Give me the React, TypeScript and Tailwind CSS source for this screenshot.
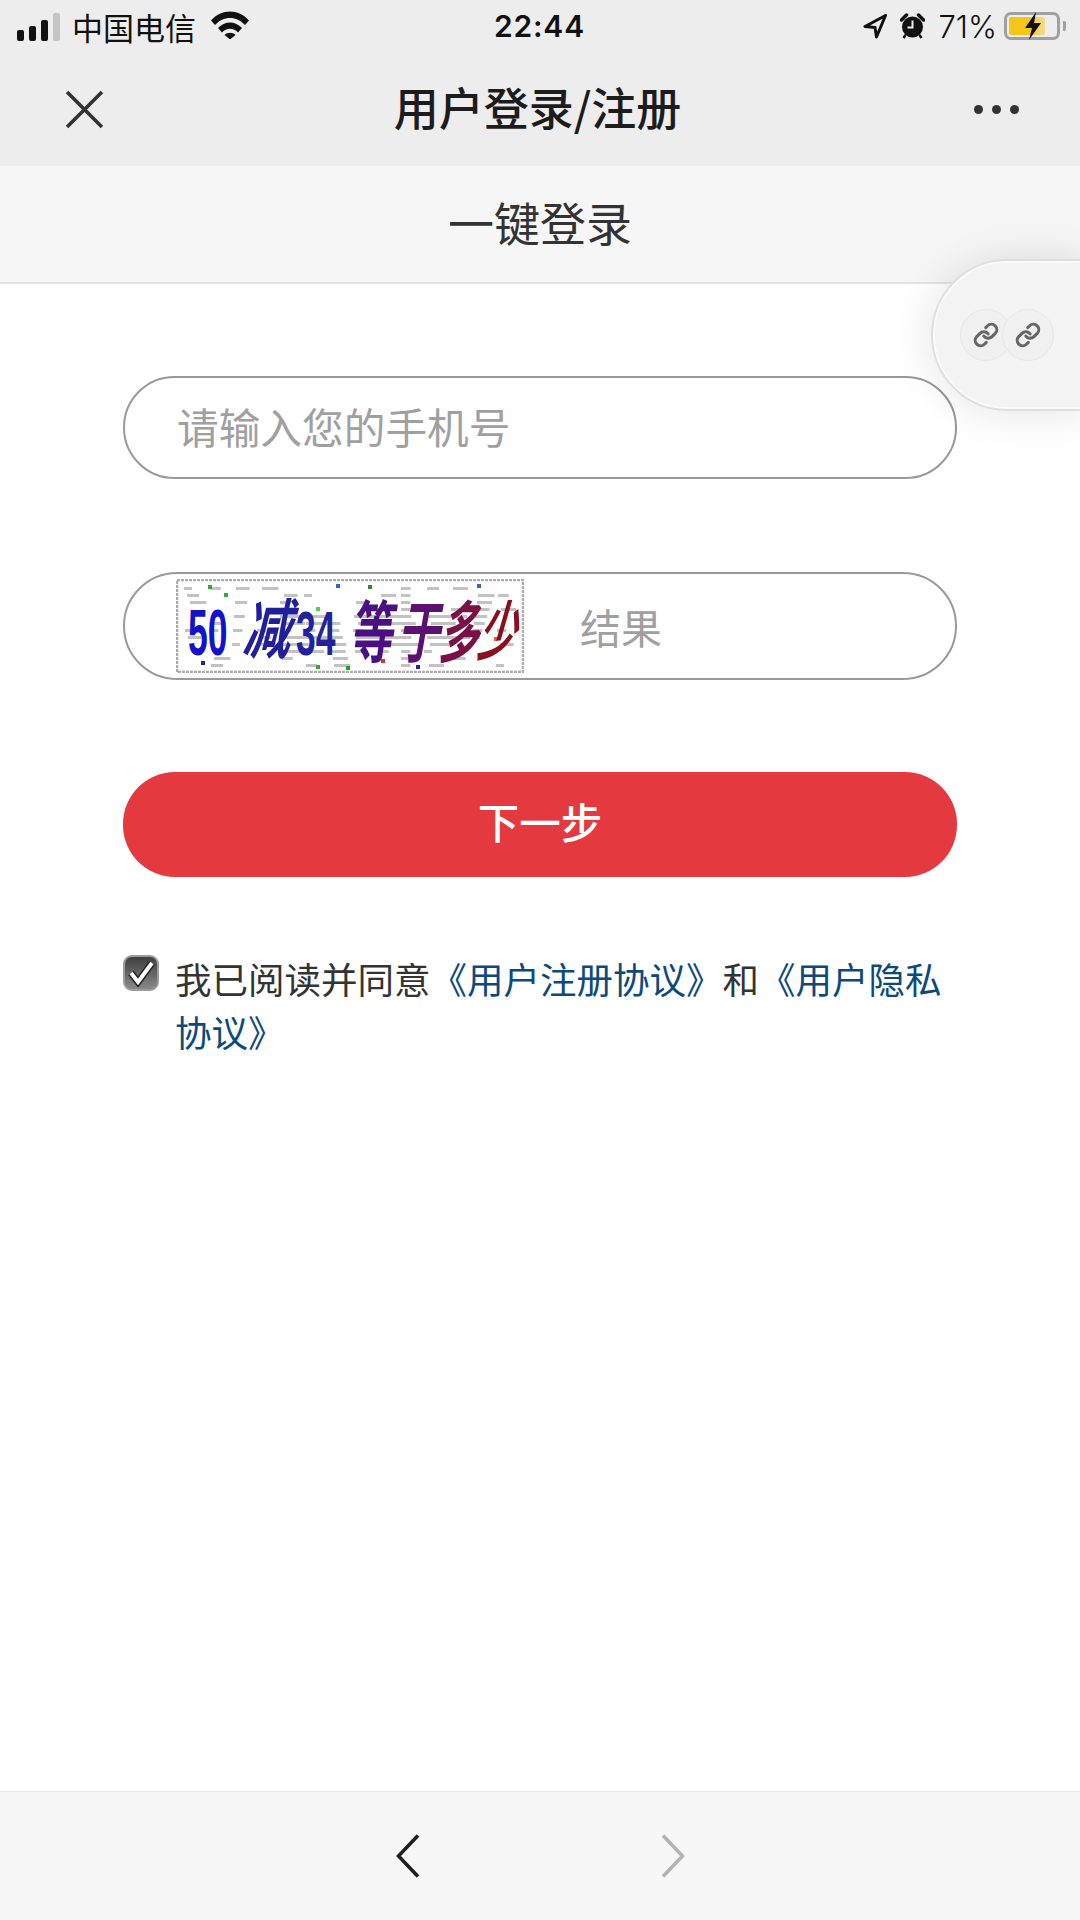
import { Link } from 'lucide-react';

const cjk = "font-['Noto_Sans_CJK_SC','Noto_Sans',sans-serif]";

function StatusBar() {
  return (
    <div className="h-[56px] pb-[4px] flex items-center justify-between relative text-[#111]">
      <div className="flex items-center">
        <div className="flex items-end gap-[5px] ml-[17px] h-[28px] mt-[1px]">
          <span className="w-[7px] h-[11px] rounded-[2px] bg-[#111]" />
          <span className="w-[7px] h-[15px] rounded-[2px] bg-[#111]" />
          <span className="w-[7px] h-[21px] rounded-[2px] bg-[#111]" />
          <span className="w-[7px] h-[28px] rounded-[2px] bg-[#c4c4c4]" />
        </div>
        <span className={`${cjk} text-[31px] leading-none ml-[12px]`}>中国电信</span>
        <svg className="ml-[15px] -mt-[3px]" width="38" height="29" viewBox="0 0 38 29">
          <path d="M0 10.5C10.5 -1.5 27.5 -1.5 38 10.5L34 15C25.5 5.5 12.5 5.5 4 15Z" fill="#111" />
          <path d="M7 18C13.5 10.5 24.5 10.5 31 18L27 22.5C22.5 17.5 15.5 17.5 11 22.5Z" fill="#111" />
          <path d="M13.5 25C16.5 22 21.5 22 24.5 25L19 29.5Z" fill="#111" />
        </svg>
      </div>
      <span className="absolute left-[494px] font-['Inter',sans-serif] font-semibold text-[30px] leading-none tracking-[0.8px]">22:44</span>
      <div className="flex items-center">
        <svg width="24" height="25" viewBox="0 0 24 25">
          <path d="M22.5 1.5L2 12.5L12 13.5L13.5 23Z" fill="none" stroke="#111" strokeWidth="3" strokeLinejoin="round" />
        </svg>
        <svg className="ml-[13px]" width="25" height="26" viewBox="0 0 24 26">
          <circle cx="12" cy="14" r="10.5" fill="#111" />
          <path d="M12 7.5V14.5H7" fill="none" stroke="#ececec" strokeWidth="2" />
          <path d="M1 7L6 2M23 7L18 2" stroke="#111" strokeWidth="3.5" strokeLinecap="round" />
          <path d="M5 22L3 25M19 22L21 25" stroke="#111" strokeWidth="2.5" />
        </svg>
        <span className="font-['Inter',sans-serif] font-light text-[31px] leading-none ml-[13px]">71%</span>
        <div className="relative ml-[7px] w-[56px] h-[28px] rounded-[7px] border-[3px] border-[#a0a0a0] p-[2px]">
          <div className="w-[36px] h-full rounded-[2px] bg-gradient-to-r from-[#f5c518] from-[55%] to-[#f3dc8a]" />
          <svg className="absolute left-[16px] -top-[3px]" width="20" height="28" viewBox="0 0 20 28">
            <path d="M13 0L2 16H9L6 28L18 11H11Z" fill="#111" />
          </svg>
        </div>
        <span className="w-[3px] h-[10px] ml-[3px] mr-[14px] rounded-r-[2px] bg-[#a0a0a0]" />
      </div>
    </div>
  );
}

function NavBar() {
  return (
    <div className="relative h-[110px] flex items-center justify-between pb-[4px] pl-[65px] pr-[61px]">
      <svg width="39" height="39" viewBox="0 0 38 38">
        <path d="M2 2L36 36M36 2L2 36" stroke="#333" strokeWidth="3.5" />
      </svg>
      <span className={`${cjk} text-[45px] leading-none font-medium text-[#1c1c1c] -ml-[3px] -mt-[5px]`}>用户登录/注册</span>
      <div className="flex gap-[9px]">
        <span className="w-[9px] h-[9px] rounded-full bg-[#333]" />
        <span className="w-[9px] h-[9px] rounded-full bg-[#333]" />
        <span className="w-[9px] h-[9px] rounded-full bg-[#333]" />
      </div>
    </div>
  );
}

// captcha is a noisy image in the original, so scatter short grey dashes across it
function Captcha() {
  const noise: number[][] = [];
  for (let row = 0; row < 12; row++) {
    for (let col = 0; col < 14; col++) {
      const seed = (row * 37 + col * 53 + row * col * 11) % 17;
      const central = col > 3 && col < 11 && row > 3 && row < 9;
      if (seed < (central ? 15 : 7)) {
        noise.push([8 + col * 24 + (seed % 9), 8 + row * 7, 8 + seed * (central ? 2.4 : 1.4)]);
      }
    }
  }
  const dots = [
    [32, 6, '#3a3'], [48, 14, '#3a3'], [160, 5, '#36c'], [192, 6, '#383'], [170, 87, '#1a1'], [140, 86, '#3a3'], [140, 28, '#5c5'], [25, 82, '#22a'], [240, 86, '#22a'], [301, 5, '#36c'], [205, 80, '#d33'], [318, 58, '#d63'],
  ] as const;
  return (
    <svg width="348" height="94" viewBox="0 0 348 94" className="shrink-0 blur-[0.5px]">
      <rect x="1" y="1" width="346" height="92" fill="#fff" stroke="#b0a8b4" strokeWidth="2.5" strokeDasharray="3 1" />
      {noise.map(([x, y, w], i) => (
        <rect key={i} x={x} y={y} width={w} height="3" fill="#c2c2c2" />
      ))}
      {dots.map(([x, y, c], i) => (
        <rect key={i} x={x} y={y} width="4" height="4" fill={c} />
      ))}
      <g fontFamily="'Liberation Sans',sans-serif" fontWeight="700" fill="#1212c8">
        <text transform="translate(12 76) scale(0.74 1.35)" fontSize="48">50</text>
        <text transform="translate(120 76) scale(0.74 1.3)" fontSize="48" fill="#22229a">34</text>
      </g>
      <g fontFamily="'Noto Sans CJK SC',sans-serif" fontWeight="700">
        <text transform="translate(66 74) skewX(-14) scale(0.95 1.3)" fontSize="50" fill="#20209a">减</text>
        <text transform="translate(174 78) skewX(-8) scale(0.85 1.35)" fontSize="50" fill="#4a0f80">等</text>
        <text transform="translate(221 78) skewX(-10) scale(0.85 1.35)" fontSize="50" fill="#5c1070">于</text>
        <text transform="translate(262 78) skewX(-12) scale(0.8 1.35)" fontSize="50" fill="#7a1048">多</text>
        <text transform="translate(300 76) skewX(-16) scale(0.75 1.3)" fontSize="50" fill="#8a1020">少</text>
      </g>
    </svg>
  );
}

function ShareCapsule() {
  return (
    <div className="absolute left-[933px] top-[261px] w-[160px] h-[148px] rounded-l-[74px] bg-[#f3f3f3] border-[2px] border-[#fafafa] ring-[2px] ring-[#dedede] shadow-[0_0_48px_rgba(0,0,0,0.12)] flex items-center pl-[25px]">
      <div className="w-[52px] h-[52px] rounded-full bg-[#f0f0f0] border border-[#e6e6e6] flex items-center justify-center">
        <Link size={26} color="#666" strokeWidth={2.8} />
      </div>
      <div className="w-[52px] h-[52px] -ml-[10px] rounded-full bg-[#f0f0f0] border border-[#e6e6e6] flex items-center justify-center">
        <Link size={26} color="#666" strokeWidth={2.8} />
      </div>
    </div>
  );
}

export default function App() {
  return (
    <div className={`${cjk} relative w-[1080px] h-[1920px] overflow-hidden bg-white flex flex-col`}>
      <div className="bg-[#ededed]">
        <StatusBar />
        <NavBar />
      </div>
      <div className="h-[118px] pb-[6px] bg-[#f6f6f6] border-b-[2px] border-[#e4e4e4] flex items-center justify-center">
        <span className="text-[46px] leading-none text-[#333]">一键登录</span>
      </div>

      <div className="flex-1 px-[123px] pt-[92px]">
        <div className="h-[103px] rounded-[52px] border-[2.5px] border-[#999] flex items-center pl-[52px] pb-[2px]">
          <span className="text-[41.7px] leading-none text-[#a0a0a0]">请输入您的手机号</span>
        </div>
        <div className="h-[108px] mt-[93px] rounded-[54px] border-[2.5px] border-[#999] flex items-center pl-[51px]">
          <Captcha />
          <span className="ml-[56px] text-[41px] leading-none text-[#a0a0a0]">结果</span>
        </div>
        <button className="block w-full h-[105px] pb-[6px] mt-[92px] rounded-[52px] bg-[#e4393f] text-white text-[41.5px] font-medium leading-none">
          下一步
        </button>
        <div className="flex mt-[78px]">
          <div className="w-[36px] h-[36px] shrink-0 rounded-[9px] border-[2px] border-[#9c9c9c] bg-gradient-to-b from-[#3f3f3f] to-[#8a8a8a] flex items-center justify-center">
            <svg width="30" height="28" viewBox="0 0 30 28">
              <path d="M5 14L12 23L26 4" fill="none" stroke="#222" strokeWidth="7" />
              <path d="M5 14L12 23L26 4" fill="none" stroke="#fff" strokeWidth="4" />
            </svg>
          </div>
          <p className="ml-[16px] -mt-[3px] w-[790px] text-[36.5px] leading-[53px] text-[#333]">
            我已阅读并同意<span className="text-[#0b4a7a]">《用户注册协议》</span>和<span className="text-[#0b4a7a]">《用户隐私协议》</span>
          </p>
        </div>
      </div>

      <div className="h-[129px] bg-[#f7f7f7] border-t border-[#e8e8e8] flex items-center justify-center gap-[241px]">
        <svg width="24" height="44" viewBox="0 0 24 44">
          <path d="M22 1.5L2.5 22L22 42.5" fill="none" stroke="#1f1f1f" strokeWidth="3.5" />
        </svg>
        <svg width="24" height="44" viewBox="0 0 24 44">
          <path d="M2 1.5L21.5 22L2 42.5" fill="none" stroke="#b3b3b3" strokeWidth="3.5" />
        </svg>
      </div>

      <ShareCapsule />
    </div>
  );
}
